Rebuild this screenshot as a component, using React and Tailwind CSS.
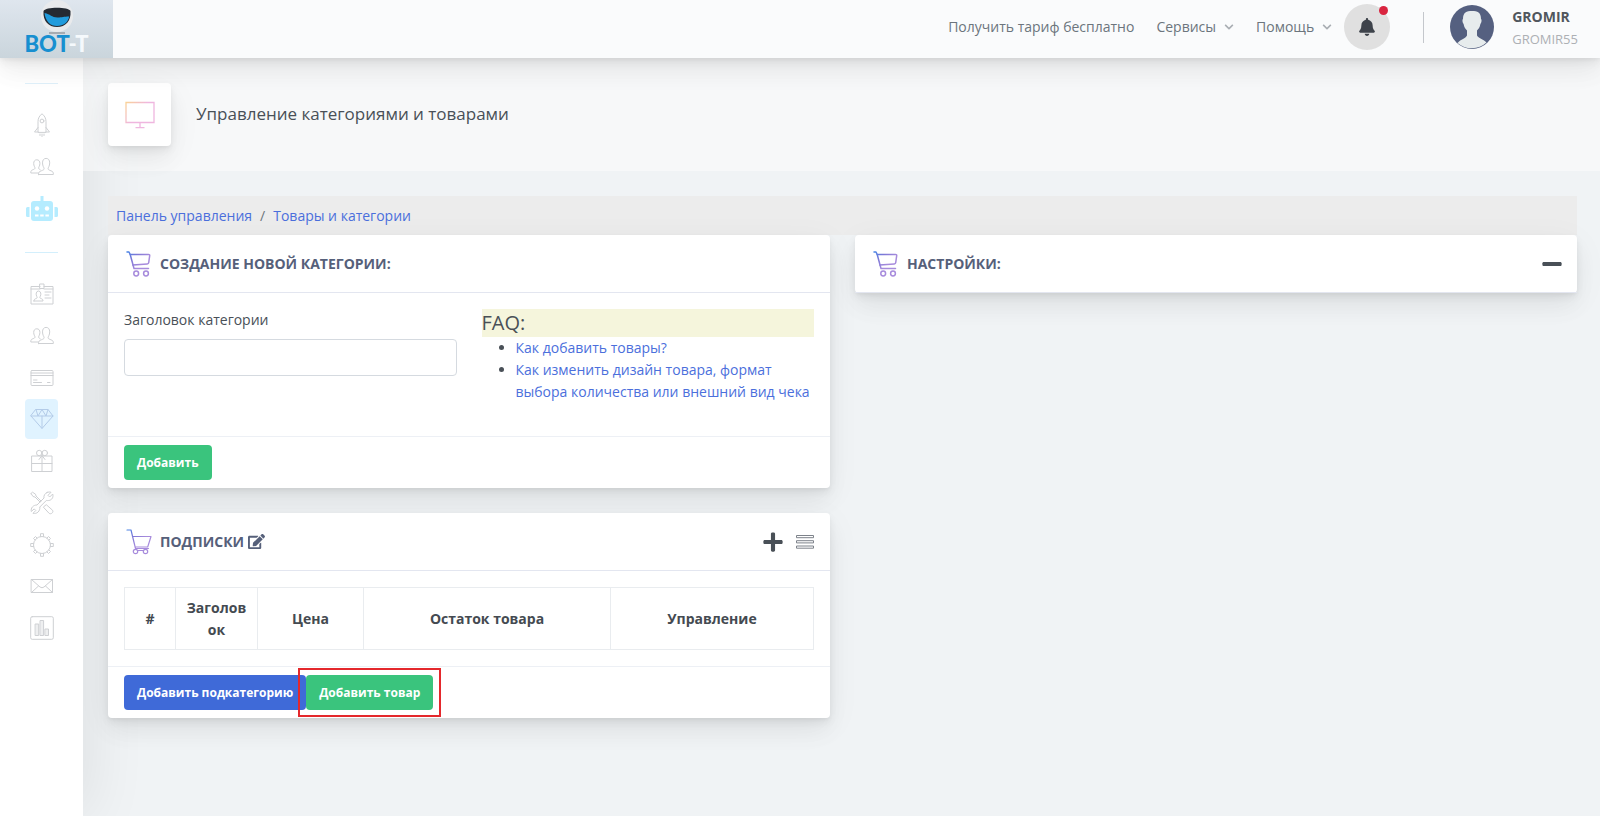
import React from "react";
import { FaEdit, FaPlus, FaMinus, FaBell, FaChevronDown } from "react-icons/fa";

const cardShadow =
  "shadow-[0_8px_35px_rgba(4,9,20,0.05),0_15px_22px_rgba(4,9,20,0.04),0_4px_9px_rgba(4,9,20,0.06),0_2px_3px_rgba(4,9,20,0.03)]";

function Stroke({ children, className = "size-6", width = 1, stroke = "currentColor" }) {
  return (
    <svg
      viewBox="0 0 24 24"
      className={className}
      fill="none"
      stroke={stroke}
      strokeWidth={width}
      strokeLinecap="round"
      strokeLinejoin="round"
      aria-hidden="true"
    >
      {children}
    </svg>
  );
}

const people = (
  <>
    <path d="M8.500 19.500H23.300c.3-2.200-.5-3-2.300-3.700-1.600-.6-2.900-.9-2.900-2.200 0-1 1.600-2.500 1.600-5.700 0-2.800-1.300-4.500-3.600-4.500s-3.600 1.700-3.600 4.500c0 3.200 1.600 4.700 1.600 5.700 0 1.300-1.200 1.600-2.800 2.200-1.900.7-3.100 1.500-2.800 3.700Z" />
    <path d="M8.300 18H.800c-.1-2 .4-2.600 1.900-3.200 1.400-.5 2.300-.8 2.300-1.800 0-.9-1.300-2.100-1.300-4.500 0-2.300 1.100-3.700 3.100-3.700s3.100 1.400 3.100 3.700c0 2.400-1.300 3.600-1.300 4.500 0 .8.500 1.200 1.500 1.600" />
  </>
);

const topItems = [
  {
    label: "Запуск",
    icon: (
      <>
        <path d="M8 19V8.500C8 5.500 9.500 2.500 12 .8c2.500 1.700 4 4.700 4 7.700V19Z" />
        <circle cx="12" cy="8" r="1.900" />
        <path d="M8 14.500 4.500 19H8M16 14.500l3.500 4.500H16M10 21v1.500M12 21v2.500M14 21v1.500" />
      </>
    ),
  },
  { label: "Пользователи", icon: people },
];

const bottomItems = [
  {
    label: "Профиль",
    icon: (
      <>
        <path d="M10 4.500H1v17.500h22V4.500h-9" />
        <path d="M10 2h4v4.500h-4ZM1 7h9M14 7h9M15 10h6M15 13h4M15 16h6" />
        <path d="M4 19h9c0-1.700-.7-2-2.600-2.700-.8-.4-.6-1.100-.2-1.800 1.200-2 .8-5.500-1.700-5.500s-2.900 3.500-1.700 5.500c.4.700.6 1.400-.2 1.800C4.700 17 4 17.300 4 19Z" />
      </>
    ),
  },
  { label: "Клиенты", icon: people },
  {
    label: "Платежи",
    icon: (
      <>
        <rect x="1" y="4.500" width="22" height="15" rx="1" />
        <path d="M1 7h22M1 9.500h22M3.500 14H7M3.500 16.500h8M17.500 16.500H20" />
      </>
    ),
  },
  {
    label: "Товары",
    active: true,
    icon: (
      <path d="M6 2.500h12l5 6.500-11 12.500L1 9ZM1 9h22M12 21V9M6 2.500 8 9l4-6.500L16 9l2-6.500" />
    ),
  },
  {
    label: "Подарки",
    icon: (
      <>
        <path d="M2 7h20v15.500H2ZM2 14.500h20M12 7v15.500M12 6.500l-3 4M12 6.500l3 4" />
        <circle cx="9.200" cy="4" r="2.700" />
        <circle cx="14.800" cy="4" r="2.700" />
      </>
    ),
  },
  {
    label: "Инструменты",
    icon: (
      <>
        <path d="M17 1.500c1.500-.7 3-.6 4-.2l-3 3 1.700 1.700 3-3c1 3-.7 6.200-4 6.500-1 .1-1.700 0-2.300-.1L9.800 16c.5 4-2.800 7.300-6.800 6.300l2.800-2.800-1.600-1.600L1.300 20.500C.5 17 3.200 14 7 14l7-7c-.5-2.200.8-4.600 3-5.500Z" />
        <path d="m1 2.500 1.500-1.300 3 2L6 5l5 5M14.500 15l1.800-1.300 6.200 5.500c1.500 2-1.500 4.500-3.300 3.200L13.700 16.500ZM1 2.500l2 3L5 6l5 5" />
      </>
    ),
  },
  {
    label: "Настройки",
    icon: (
      <>
        <circle cx="12" cy="12" r="8.500" />
        <path d="M10.500 3.500V.7h3v2.800M10.500 20.500v2.800h3v-2.800M3.500 10.500H.7v3h2.800M20.500 10.500h2.800v3h-2.800M5 7 3.500 5.500l2-2L7 5M17 5l1.500-1.500 2 2L19 7M19 17l1.500 1.500-2 2L17 19M7 19l-1.500 1.500-2-2L5 17" />
      </>
    ),
  },
  {
    label: "Почта",
    icon: (
      <path d="M1.500 5.500h21v13h-21ZM1.500 5.500 10 13q2 1.500 4 0l8.500-7.500M1.500 18.500l7-6.500M22.500 18.500l-7-6.500" />
    ),
  },
  {
    label: "Статистика",
    icon: (
      <>
        <rect x="0.700" y="0.700" width="22.600" height="22.600" rx="1.500" />
        <path fill="#eeeff0" d="M5.500 8h3.200v11.500H5.500ZM10.400 4.500h3.200v15h-3.200ZM15.300 13h3.200v6.500h-3.200Z" />
      </>
    ),
  },
];

function NavItem({ item }) {
  return (
    <li>
      <a
        href="#"
        aria-label={item.label}
        className={
          item.active
            ? "flex h-10 items-center justify-center rounded bg-[#e0f3ff] text-[#b3cbe8]"
            : "flex h-10 items-center justify-center text-[#ced0d3]"
        }
      >
        <Stroke>{item.icon}</Stroke>
      </a>
    </li>
  );
}

function Robot() {
  return (
    <svg viewBox="0 0 32 26" className="h-[26px] w-8" aria-hidden="true">
      <path
        fill="#b5ecff"
        d="M14.500 0h3v5H24a3 3 0 0 1 3 3v14a3 3 0 0 1-3 3H8a3 3 0 0 1-3-3V8a3 3 0 0 1 3-3h6.500ZM1.500 11H3.500v10h-2A1.500 1.500 0 0 1 0 19.500v-7A1.500 1.500 0 0 1 1.500 11ZM28.500 11h2a1.500 1.500 0 0 1 1.500 1.500v7a1.500 1.500 0 0 1-1.500 1.500h-2Z"
      />
      <circle cx="11" cy="12.500" r="2.200" fill="#fff" />
      <circle cx="21" cy="12.500" r="2.200" fill="#fff" />
      <path fill="#fff" d="M9 18.500h3.500v2H9ZM14.200 18.500h3.500v2h-3.500ZM19.400 18.500h3.500v2h-3.500Z" />
    </svg>
  );
}

function Cart({ open }) {
  return (
    <svg viewBox="0 0 26 26" className="size-[26px] shrink-0" fill="none" strokeLinecap="round" strokeLinejoin="round" aria-hidden="true">
      <defs>
        <linearGradient id="cart-ink" gradientUnits="userSpaceOnUse" x1="0" y1="0" x2="14" y2="14">
          <stop offset="0" stopColor="#3f86e8" />
          <stop offset="0.500" stopColor="#7d78d6" />
          <stop offset="1" stopColor="#a78bdc" />
        </linearGradient>
      </defs>
      {open ? (
        <g stroke="url(#cart-ink)" strokeWidth="1.200">
          <path d="M1 1h4l4.500 18.500h13M6.500 7.500h18.500l-3.300 10.500H9" />
          <circle cx="9.500" cy="22.500" r="2.200" />
          <circle cx="19.500" cy="22.500" r="2.200" />
          <path d="M11.700 21.500h5.700" />
        </g>
      ) : (
        <g stroke="url(#cart-ink)" strokeWidth="1.500">
          <path d="M1 1h2l1.200 2.500L8 17.500h14.500" />
          <path d="M4.200 3.500h18.300q1.400 0 1.200 1.200l-1 7q-.2 1.200-1.400 1.300L6.800 14" />
          <circle cx="10.200" cy="22.500" r="2.400" />
          <circle cx="20" cy="22.500" r="2.400" />
        </g>
      )}
    </svg>
  );
}

function Logo() {
  return (
    <a href="#" aria-label="BOT-T" className="flex w-[113px] shrink-0 flex-col items-center bg-linear-to-b from-[#dfe6ee] to-[#cad5dc]">
      <svg viewBox="0 0 34 34" className="h-[34px] w-[34px]" aria-hidden="true">
        <circle cx="17" cy="16" r="16" fill="#e9eaec" />
        <path fill="#252a32" d="M3.500 11C5 6.500 29 6.500 30.500 11c.8 10-5 16-13.500 16S2.700 21 3.500 11Z" />
        <path fill="#219bdc" d="M4.500 13c6 1 7 4.500 13 4.500 5 0 6-1 11.700-1C28 22.500 23.500 26 17 26S5.500 21.500 4.500 13Z" />
        <path stroke="#a6abb1" strokeWidth="2" d="M9 33h16" />
      </svg>
      <span className="-mt-0.5 font-['Lato'] text-[22px] leading-6 font-black text-[#178fd0]">
        BOT<span className="text-[#f5f9fc]">-T</span>
      </span>
    </a>
  );
}

function CardHeader({ title, open, children }) {
  return (
    <header className="flex h-[58px] items-center border-b border-[#e3e6f0] px-[18px]">
      <Cart open={open} />
      <h2 className="ml-2 flex items-center gap-1 text-[14px] font-bold text-[#56607a] uppercase">{title}</h2>
      {children}
    </header>
  );
}

function Button({ green, children }) {
  return (
    <button
      type="button"
      className={
        green
          ? "h-[35px] rounded bg-[#3ac47d] px-[13px] text-[12px] font-bold text-white"
          : "h-[35px] rounded bg-[#3f6ad8] px-[13px] text-[12px] font-bold text-white"
      }
    >
      {children}
    </button>
  );
}

export default function App() {
  return (
    <div className="flex min-h-screen flex-col bg-[#f0f3f5] font-['Open_Sans','Noto_Sans',sans-serif] text-[14px] leading-[22px] text-[#495057]">
      <header className={`relative z-10 flex h-[58px] bg-[#fafbfc] ${cardShadow}`}>
        <Logo />
        <nav className="ml-auto flex items-center pb-1 text-[#6c757d]">
          <a href="#" className="mr-[22px]">Получить тариф бесплатно</a>
          <button type="button" className="mr-[22px] flex items-center gap-2">
            Сервисы <FaChevronDown className="size-2.5 text-[#a9aeb3]" />
          </button>
          <button type="button" className="mr-3 flex items-center gap-2">
            Помощь <FaChevronDown className="size-2.5 text-[#a9aeb3]" />
          </button>
          <button type="button" aria-label="Уведомления" className="relative flex size-[46px] items-center justify-center rounded-full bg-[#e0e0e0] text-[#3e434b]">
            <FaBell className="size-[18px]" />
            <span className="absolute top-0.5 right-0.5 size-[9px] rounded-full bg-[#d92540]" />
          </button>
        </nav>
        <div className="mr-[26px] ml-[33px] mt-3 h-[31px] w-px bg-[#c4c7cc]" />
        <div className="flex gap-[18px] pr-[22px]">
          <svg viewBox="0 0 44 44" className="mt-[5px] size-11" aria-hidden="true">
            <circle cx="22" cy="22" r="22" fill="#556080" />
            <path fill="#e7eced" d="M22 6c5.500 0 9 1.500 9 8 1 .5.500 4-.6 5-.5 3.500-2 5-3.400 6.500v5c1.500 3 6 3.500 9.500 7A22 22 0 0 1 7.500 38c3.500-4 8-4.500 9.500-7.500v-5c-1.400-1.500-2.900-3-3.400-6.500-1.100-1-1.600-4.500-.6-5 0-6.500 3.500-8 9-8Z" />
          </svg>
          <div className="pt-1.5">
            <div className="text-[14px] font-bold text-[#50565d]">GROMIR</div>
            <div className="text-[13px] text-[#adb0b4]">GROMIR55</div>
          </div>
        </div>
      </header>

      <div className="flex grow">
        <aside className="w-[83px] shrink-0 bg-white px-[25px] pt-[25px] shadow-[7px_0_60px_rgba(0,0,0,0.08)]">
          <hr className="border-[#dff0fa]" />
          <ul className="mt-[21px] flex flex-col gap-0.5">
            {topItems.map((item) => (
              <NavItem key={item.label} item={item} />
            ))}
            <li>
              <a href="#" aria-label="Боты" className="flex h-10 items-center justify-center">
                <Robot />
              </a>
            </li>
          </ul>
          <hr className="mt-[23px] border-[#d3effc]" />
          <ul className="mt-[21px] flex h-[374px] flex-col justify-between">
            {bottomItems.map((item) => (
              <NavItem key={item.label} item={item} />
            ))}
          </ul>
        </aside>

        <main className="min-w-0 grow">
          <div className="flex items-center gap-[25px] bg-white/45 py-[25px] pl-[25px]">
            <div className={`flex size-[63px] items-center justify-center rounded bg-white ${cardShadow}`}>
              <svg viewBox="0 0 30 28" className="h-7 w-[30px]" fill="none" strokeWidth="1.300" aria-hidden="true">
                <defs>
                  <linearGradient id="screen-ink" gradientUnits="userSpaceOnUse" x1="0" y1="0" x2="14" y2="12">
                    <stop offset="0" stopColor="#fbd58f" />
                    <stop offset="1" stopColor="#efb6df" />
                  </linearGradient>
                </defs>
                <path stroke="url(#screen-ink)" d="M1 1.500h28v20H1ZM15 21.500v5M10.500 26.700h9" />
              </svg>
            </div>
            <h1 className="pb-0.5 text-[17px] leading-6">Управление категориями и товарами</h1>
          </div>

          <div className="pt-[25px] pr-[23px] pl-[25px]">
            <nav aria-label="Путь" className="flex h-[39px] items-center gap-2 bg-[#ececec] px-2 text-[#4b6fdc]">
              <a href="#">Панель управления</a>
              <span className="text-[#6c757d]">/</span>
              <a href="#">Товары и категории</a>
            </nav>

            <div className="grid grid-cols-2 items-start gap-[25px]">
              <div className="flex flex-col gap-[25px]">
                <section className={`rounded bg-white ${cardShadow}`}>
                  <CardHeader title="Создание новой категории:" />
                  <div className="grid h-[143px] grid-cols-2 gap-[25px] px-4 pt-4">
                    <div>
                      <label htmlFor="category-title" className="block">Заголовок категории</label>
                      <input id="category-title" type="text" className="mt-2 h-[37px] w-full rounded border border-[#d5dae0] bg-white px-3 outline-none" />
                    </div>
                    <div>
                      <h3 className="bg-[#f5f5dc] text-[20px] leading-7">FAQ:</h3>
                      <ul className="list-disc pl-[34px]">
                        <li><a href="#" className="text-[#4b6fdc]">Как добавить товары?</a></li>
                        <li><a href="#" className="text-[#4b6fdc]">Как изменить дизайн товара, формат выбора количества или внешний вид чека</a></li>
                      </ul>
                    </div>
                  </div>
                  <footer className="flex h-[52px] items-center border-t border-[#edf0f5] px-4">
                    <Button green>Добавить</Button>
                  </footer>
                </section>

                <section className={`rounded bg-white ${cardShadow}`}>
                  <CardHeader
                    open
                    title={
                      <>
                        Подписки
                        <button type="button" aria-label="Редактировать">
                          <FaEdit className="size-[17px]" />
                        </button>
                      </>
                    }
                  >
                    <button type="button" aria-label="Добавить" className="ml-auto text-[#495057]">
                      <FaPlus className="size-[22px]" />
                    </button>
                    <button type="button" aria-label="Список" className="-mr-0.5 ml-3 text-[#7d828a]">
                      <svg viewBox="0 0 18 14" className="h-3.5 w-[18px]" fill="none" stroke="currentColor" aria-hidden="true">
                        <path d="M.5.500h17v2.200H.5ZM.5 5.700h17v2.200H.5ZM.5 11h17v2.200H.5Z" />
                      </svg>
                    </button>
                  </CardHeader>
                  <div className="px-4 py-4">
                    <table className="h-[63px] w-full table-fixed border-collapse text-center text-[14px] text-[#444a51]">
                      <thead>
                        <tr>
                          <th className="w-[51px] border border-[#e9ecef]">#</th>
                          <th className="w-[82px] border border-[#e9ecef] px-2 break-words">Заголовок</th>
                          <th className="w-[106px] border border-[#e9ecef]">Цена</th>
                          <th className="w-[247px] border border-[#e9ecef]">Остаток товара</th>
                          <th className="border border-[#e9ecef]">Управление</th>
                        </tr>
                      </thead>
                    </table>
                  </div>
                  <footer className="flex h-[52px] items-center border-t border-[#edf0f5] px-4">
                    <Button>Добавить подкатегорию</Button>
                    <div className="relative">
                      <Button green>Добавить товар</Button>
                      <span className="pointer-events-none absolute -inset-x-2 -inset-y-[7px] border-2 border-[#e4282c]" />
                    </div>
                  </footer>
                </section>
              </div>

              <section className={`rounded bg-white ${cardShadow}`}>
                <CardHeader title="Настройки:">
                  <button type="button" aria-label="Свернуть" className="-mr-1 ml-auto text-[#495057]">
                    <FaMinus className="size-[22px]" />
                  </button>
                </CardHeader>
              </section>
            </div>
          </div>
        </main>
      </div>
    </div>
  );
}
